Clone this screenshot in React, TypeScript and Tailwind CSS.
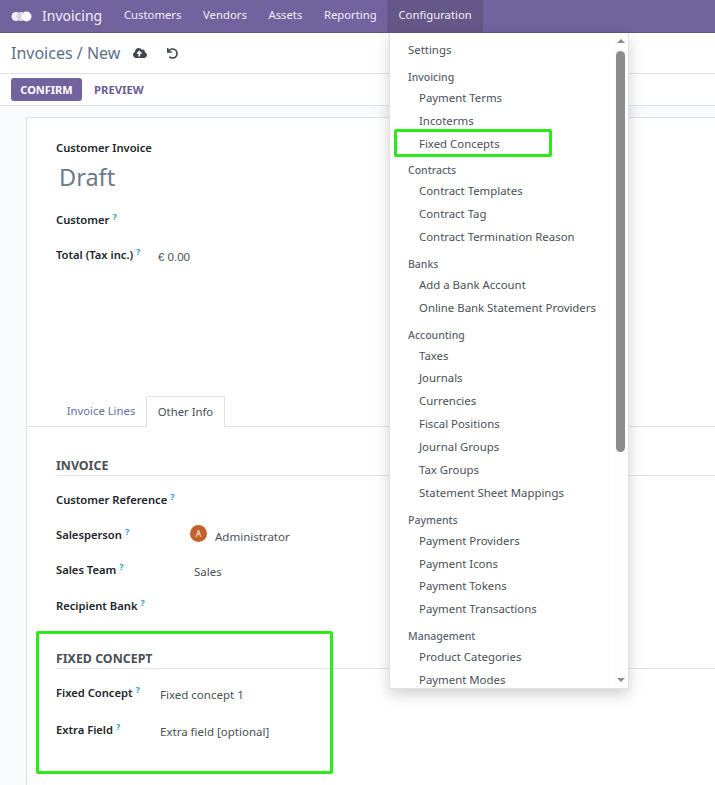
import React from 'react';
import { FaCloudUploadAlt, FaUndo } from 'react-icons/fa';

const navItems = ['Customers', 'Vendors', 'Assets', 'Reporting'];

const menuGroups = [
  { title: 'Invoicing', items: ['Payment Terms', 'Incoterms', 'Fixed Concepts'] },
  { title: 'Contracts', items: ['Contract Templates', 'Contract Tag', 'Contract Termination Reason'] },
  { title: 'Banks', items: ['Add a Bank Account', 'Online Bank Statement Providers'] },
  { title: 'Accounting', items: ['Taxes', 'Journals', 'Currencies', 'Fiscal Positions', 'Journal Groups', 'Tax Groups', 'Statement Sheet Mappings'] },
  { title: 'Payments', items: ['Payment Providers', 'Payment Icons', 'Payment Tokens', 'Payment Transactions'] },
  { title: 'Management', items: ['Product Categories', 'Payment Modes'] },
];

const Help = () => <sup className="ml-[3px] text-[9px] font-bold text-[#2a9fc9] leading-none">?</sup>;

const Label = ({ children }: { children: React.ReactNode }) => (
  <span className="text-[11.2px] font-semibold text-[#212529] whitespace-nowrap">
    {children}
    <Help />
  </span>
);

const Section = ({ title }: { title: string }) => (
  <div className="h-[20px] border-b border-[#e2e5e9] text-[12.4px] font-bold text-[#4a4f55] leading-[19px]">{title}</div>
);

const App = () => {
  return (
    <div className="relative w-[715px] h-[785px] overflow-hidden bg-[#f9fafb] font-['Noto_Sans',sans-serif] text-[#495057]">
      {/* Navbar */}
      <div className="h-[33px] bg-[#71639e] border-b border-[#5f5387] flex items-center text-white">
        <svg className="ml-[11px] w-[21px] h-[11px]" viewBox="0 0 21 11">
          <circle cx="5" cy="5.5" r="4.5" fill="#f3f0f7" />
          <circle cx="10" cy="5.5" r="4.5" fill="#d9d3e6" />
          <circle cx="15.5" cy="5.5" r="5" fill="#ffffff" />
        </svg>
        <span className="ml-[10px] pb-[2px] text-[14px] text-[#f1eef6]">Invoicing</span>
        <div className="ml-[11px] flex h-full text-[11.3px] text-[#f1eef6]">
          {navItems.map(item => (
            <div key={item} className="flex items-center px-[10.8px] pb-[1px]">{item}</div>
          ))}
          <div className="flex items-center px-[11px] pb-[1px] bg-[#655889]">Configuration</div>
        </div>
      </div>

      {/* Control panel */}
      <div className="bg-white">
        <div className="h-[41px] border-b border-[#dee2e6] flex items-center pl-[11px]">
          <span className="text-[16px] text-[#5c6f8a]">Invoices / New</span>
          <FaCloudUploadAlt className="ml-[13px] text-[14px] text-[#3f4650]" />
          <FaUndo className="ml-[20px] text-[11px] text-[#3f4650]" />
        </div>
        <div className="h-[32px] border-b border-[#dee2e6] flex items-center pl-[11px]">
          <div className="h-[23px] w-[71px] pt-[1px] rounded-[3px] bg-[#71639e] text-white text-[11px] font-bold flex items-center justify-center">CONFIRM</div>
          <div className="ml-[12px] pt-[1px] text-[11.3px] font-bold text-[#6a5c96]">PREVIEW</div>
        </div>
      </div>

      {/* Form sheet */}
      <div className="mt-[11px] ml-[26px] w-[800px] h-[700px] bg-white border border-[#dee2e6]">
        <div className="pl-[29px] pt-[22px]">
          <div className="h-[18px] text-[11.2px] font-semibold text-[#212529]">Customer Invoice</div>
          <div className="mt-[1px] pl-[3px] h-[36px] text-[23.5px] leading-[36px] text-[#6c7a89]">Draft</div>
          <div className="mt-[11px] h-[18px]"><Label>Customer</Label></div>
          <div className="mt-[17px] h-[18px] flex">
            <div className="w-[102px]"><Label>Total (Tax inc.)</Label></div>
            <span className="pt-[8px] text-[11.5px] font-['Liberation_Sans',sans-serif] text-[#495057]">€ 0.00</span>
          </div>
        </div>

        {/* Tabs */}
        <div className="mt-[137px] h-[31px] border-b border-[#dee2e6] flex pl-[29px] text-[11.3px]">
          <div className="w-[90px] h-[30px] flex items-center justify-center text-[#6a6fa0]">Invoice Lines</div>
          <div className="w-[79px] h-[31px] bg-white border border-b-0 border-[#dee2e6] rounded-t-[2px] flex items-center justify-center text-[#495057]">Other Info</div>
        </div>

        <div className="pl-[29px] pt-[29px]">
          <Section title="INVOICE" />
          <div className="mt-[10px] h-[18px]"><Label>Customer Reference</Label></div>
          <div className="mt-[17px] h-[18px] flex">
            <div className="w-[134px]"><Label>Salesperson</Label></div>
            <div className="mt-[4px] w-[17px] h-[17px] rounded-full bg-[#c2622a] text-white text-[8px] flex items-center justify-center">A</div>
            <span className="ml-[8px] pt-[7px] text-[11.5px]">Administrator</span>
          </div>
          <div className="mt-[17px] h-[18px] flex">
            <div className="w-[138px]"><Label>Sales Team</Label></div>
            <span className="pt-[7px] text-[11.5px]">Sales</span>
          </div>
          <div className="mt-[18px] h-[18px]"><Label>Recipient Bank</Label></div>

          <div className="mt-[39px]">
            <Section title="FIXED CONCEPT" />
          </div>
          <div className="mt-[10px] h-[18px] flex">
            <div className="w-[104px]"><Label>Fixed Concept</Label></div>
            <span className="pt-[7px] text-[11.5px]">Fixed concept 1</span>
          </div>
          <div className="mt-[19px] h-[18px] flex">
            <div className="w-[104px]"><Label>Extra Field</Label></div>
            <span className="pt-[7px] text-[11.5px]">Extra field [optional]</span>
          </div>
        </div>
      </div>

      {/* Green highlight around the fixed concept section */}
      <div className="absolute left-[36px] top-[631px] w-[297px] h-[143px] border-[3px] border-[#2fe81c] rounded-[2px]" />

      {/* Configuration dropdown */}
      <div className="absolute left-[389px] top-[33px] w-[240px] h-[656px] bg-white border-x border-b border-[#dfe1e6] shadow-[0_6px_14px_rgba(0,0,0,0.18)] flex overflow-hidden">
        <div className="flex-1 pt-[6.2px] text-[11.4px] text-[#495057]">
          <div className="relative h-[22.9px] pl-[18px] leading-[22.9px]">Settings</div>
          {menuGroups.map(group => (
            <div key={group.title}>
              <div className="mt-[5.85px] h-[19px] pl-[18px] text-[10.5px] font-medium leading-[19px] text-[#5b6470]">{group.title}</div>
              {group.items.map(item => (
                <div key={item} className="h-[22.9px] pl-[29px] leading-[22.9px] whitespace-nowrap">{item}</div>
              ))}
            </div>
          ))}
        </div>
        {/* Scrollbar */}
        <div className="w-[15px] bg-[#fdfdfd] flex flex-col items-center pt-[6px] pb-[6px]">
          <div className="w-0 h-0 border-x-[4px] border-x-transparent border-b-[4px] border-b-[#8c8c8c]" />
          <div className="mt-[8px] w-[9px] h-[401px] rounded-full bg-[#8c8c8c]" />
          <div className="mt-auto w-0 h-0 border-x-[4px] border-x-transparent border-t-[4px] border-t-[#8c8c8c]" />
        </div>
      </div>

      {/* Green highlight on the menu entry */}
      <div className="absolute left-[394px] top-[129px] w-[158px] h-[28px] border-[3px] border-[#2fe81c] rounded-[2px]" />
    </div>
  );
};

export default App;
